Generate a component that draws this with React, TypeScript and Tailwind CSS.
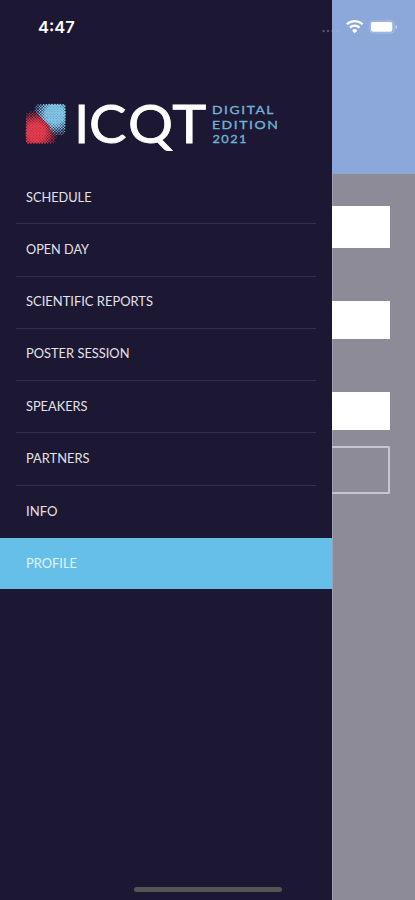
const menuItems = [
  { label: "SCHEDULE", width: 65.5 },
  { label: "OPEN DAY", width: 63 },
  { label: "SCIENTIFIC REPORTS", width: 127 },
  { label: "POSTER SESSION", width: 103.5 },
  { label: "SPEAKERS", width: 61.5 },
  { label: "PARTNERS", width: 63.5 },
  { label: "INFO", width: 31.5 },
  { label: "PROFILE", width: 51, active: true },
];

type Dot = { x: number; y: number; r: number; fill: string };

// Halftone dots: two overlapping blobs, fading out from their centres
function buildDots() {
  const dots: Dot[] = [];
  for (let row = 0; row < 28; row++) {
    for (let col = 0; col < 14; col++) {
      const x = 0.8 + col * 2.8 + (row % 2) * 1.4;
      const y = 0.9 + row * 1.4;
      const blue = Math.hypot(x - 29, y - 10.5);
      const red = Math.hypot(x - 10, y - 28);
      const isBlue = blue < red;
      const r = Math.min(1.3, 1.35 - (Math.min(blue, red) - 7) * 0.06);
      if (r > 0.5 && x < 39 && y < 39) {
        dots.push({ x, y, r, fill: isBlue ? "#82c5e7" : "#e43c4c" });
      }
    }
  }
  return dots;
}

const dots = buildDots();

function Logo() {
  return (
    <svg
      width="260"
      height="72"
      viewBox="0 0 260 72"
      className="block overflow-visible font-['Lato',sans-serif]"
    >
      <g transform="translate(0 4)">
        {dots.map((dot, i) => (
          <circle key={i} cx={dot.x} cy={dot.y} r={dot.r} fill={dot.fill} />
        ))}
      </g>
      <g fill="#fff" stroke="#fff" strokeWidth="0.8" fontSize="53">
        <text y="43">
          <tspan x="48.2">I</tspan>
          <tspan x="63" textLength="37.5" lengthAdjust="spacingAndGlyphs">
            C
          </tspan>
          <tspan x="102" textLength="45" lengthAdjust="spacingAndGlyphs">
            Q
          </tspan>
          <tspan x="146.3" textLength="34" lengthAdjust="spacingAndGlyphs">
            T
          </tspan>
        </text>
      </g>
      <g
        fill="#71b3d3"
        stroke="#71b3d3"
        strokeWidth="0.35"
        fontSize="12.3"
        letterSpacing="1.4"
      >
        <text
          x="186"
          y="13.5"
          textLength="63"
          lengthAdjust="spacingAndGlyphs"
        >
          DIGITAL
        </text>
        <text
          x="186"
          y="28.5"
          textLength="67.5"
          lengthAdjust="spacingAndGlyphs"
        >
          EDITION
        </text>
        <text
          x="186.5"
          y="43.3"
          textLength="35.5"
          lengthAdjust="spacingAndGlyphs"
        >
          2021
        </text>
      </g>
    </svg>
  );
}

function StatusIcons() {
  return (
    <svg
      width="80"
      height="20"
      viewBox="0 0 80 20"
      className="absolute left-[318px] top-[17px]"
    >
      <g fill="#a9b4da" opacity="0.4">
        <circle cx="5.5" cy="14" r="1.2" />
        <circle cx="10" cy="14" r="1.2" />
        <circle cx="14.5" cy="14" r="1.2" />
        <circle cx="19.5" cy="14" r="1.2" />
      </g>
      <g fill="none" stroke="#fff" strokeWidth="2.3">
        <path d="M28.8 7.3a11.2 11.2 0 0 1 15.8 0" />
        <path d="M31.9 10.6a7 7 0 0 1 9.6 0" />
      </g>
      <path d="M36.7 16.2l-2.7-2.8a3.8 3.8 0 0 1 5.4 0z" fill="#fff" />
      <rect
        x="52"
        y="4"
        width="24"
        height="12"
        rx="3.2"
        fill="none"
        stroke="#b9caee"
        strokeOpacity="0.7"
      />
      <rect x="53" y="5" width="21.3" height="9.7" rx="1.8" fill="#fff" />
      <path d="M77.5 8v4c2-.6 2-3.4 0-4z" fill="#c5d4f2" />
    </svg>
  );
}

function Drawer() {
  return (
    <aside className="flex h-full w-[332px] flex-none flex-col bg-[#1c1733]">
      <div className="h-[100px] pl-[38px] pt-[16px] font-['Inter',sans-serif] text-[16.5px] font-semibold leading-[22px] text-white">
        4:47
      </div>
      <div className="h-[72px] pl-[26px]">
        <Logo />
      </div>

      <nav className="flex flex-col">
        {menuItems.map((item, i) => (
          <a
            key={item.label}
            href="#"
            className={
              item.active
                ? "flex h-[51.5px] items-center bg-[#66bfe9] pl-[26px]"
                : "flex h-[52.25px] flex-col pl-4 pr-4"
            }
          >
            <span
              className={
                item.active ? "flex" : "flex flex-1 items-center pl-2.5"
              }
            >
              <svg width="140" height="18" className="block overflow-visible">
                <text
                  x="0"
                  y="12.5"
                  fontSize="13"
                  textLength={item.width}
                  lengthAdjust="spacingAndGlyphs"
                  fill={item.active ? "#e0f3fc" : "#e4e2e8"}
                  className="font-['Lato',sans-serif]"
                >
                  {item.label}
                </text>
              </svg>
            </span>
            {i < 6 && <span className="h-px bg-[#342f4b]" />}
          </a>
        ))}
      </nav>
    </aside>
  );
}

function App() {
  return (
    <div className="relative flex h-[900px] w-[415px] overflow-hidden bg-[#8e8b99]">
      <Drawer />

      {/* Page behind the drawer */}
      <main className="flex flex-1 flex-col border-l border-[#a3a0b0]">
        <div className="-ml-px h-[174px] flex-none bg-[#8ca8da]" />
        <div className="-ml-px mr-[25px] flex flex-col pt-8">
          <div className="h-[42px] bg-white" />
          <div className="mt-[53px] h-[38px] bg-white" />
          <div className="mt-[53px] h-[38px] bg-white" />
          <div className="mt-4 h-12 rounded-r-xs border-2 border-l-0 border-[#c7c4d3]" />
        </div>
      </main>

      <StatusIcons />
      <div className="absolute bottom-[8px] left-[134px] h-[5px] w-[148px] rounded-full bg-[#555353]" />
    </div>
  );
}

export default App;
